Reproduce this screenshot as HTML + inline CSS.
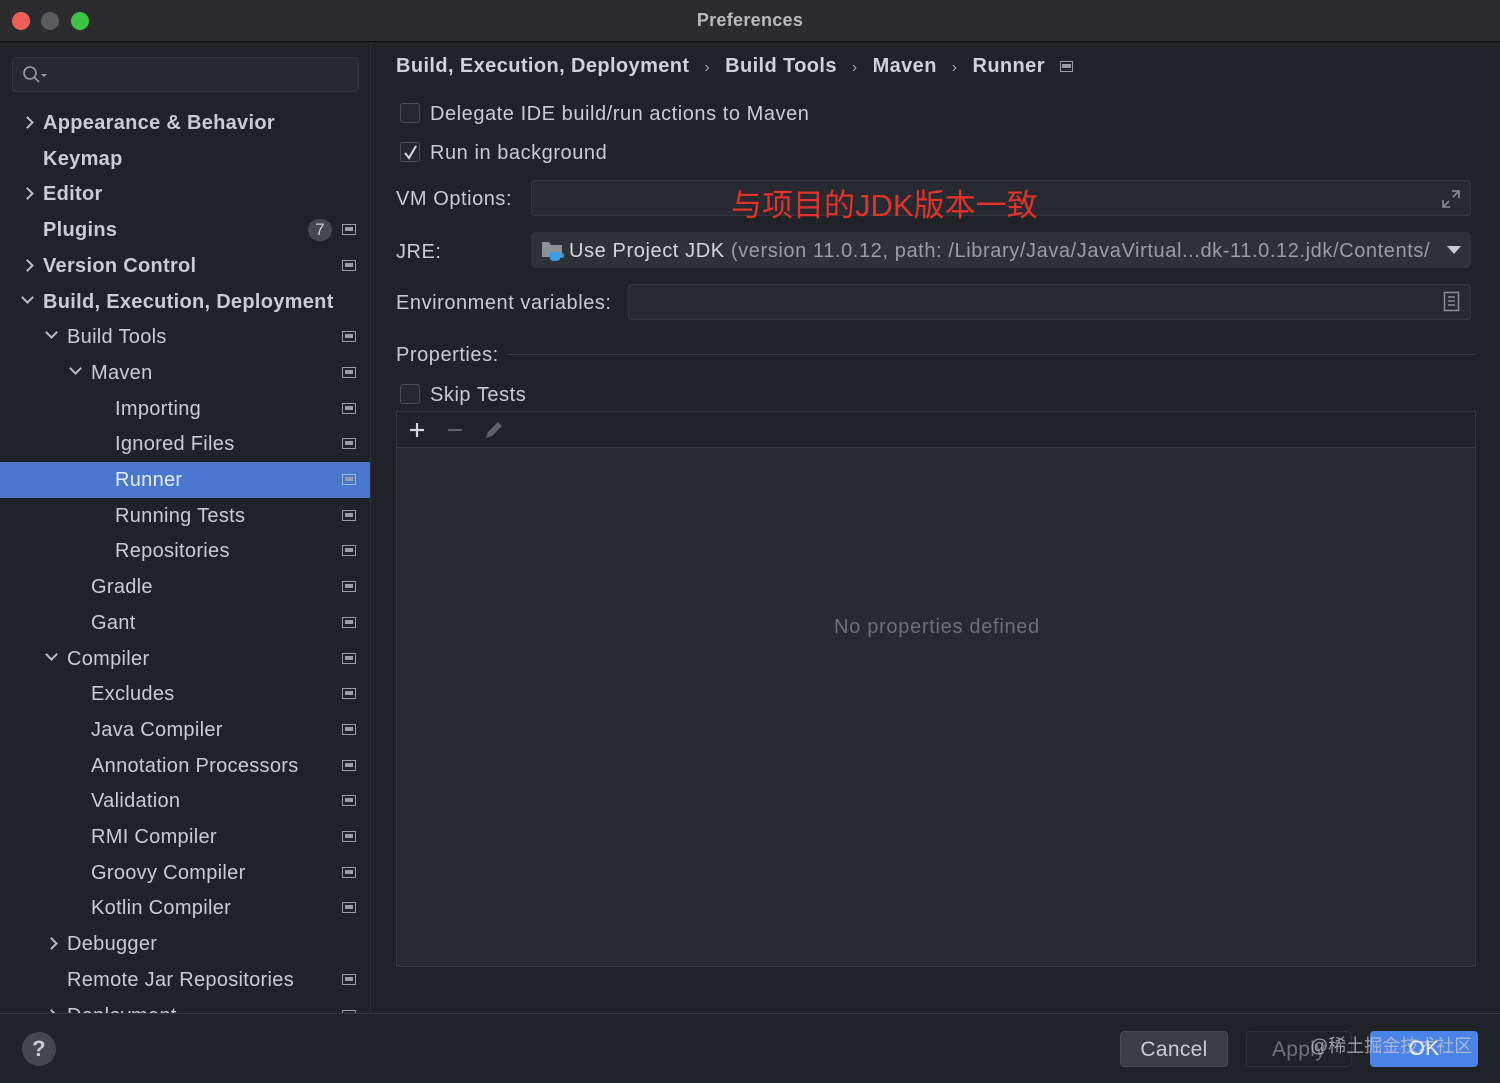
<!DOCTYPE html>
<html><head><meta charset="utf-8">
<style>
*{margin:0;padding:0;box-sizing:border-box}
body{width:1500px;height:1083px;background:#1e2025;font-family:"Liberation Sans","Noto Sans CJK SC",sans-serif;color:#c9ccd1;overflow:hidden;position:relative;font-size:20px;letter-spacing:0.3px}
.abs{position:absolute}
.title{left:0;top:0;width:1500px;height:42px;background:#2c2c2f;border-bottom:1px solid #101113;text-align:center;line-height:40px;font-weight:bold;font-size:18px;color:#b9babd}
.dot{position:absolute;top:12px;width:18px;height:18px;border-radius:50%}
.side{left:0;top:42px;width:371px;height:971px;background:#1f2227;border-right:1px solid #2d3036;overflow:hidden}
.row{position:absolute;left:0;width:371px;height:36px;line-height:36px;white-space:nowrap}
.row.b{font-weight:bold}
.row.sel{background:#4a77cd;color:#e6ecf6}
.arr{position:absolute;top:13px;width:9px;height:9px;border-right:2px solid #b9bcc2;border-bottom:2px solid #b9bcc2}
.r{transform:rotate(-45deg)}
.d{transform:rotate(45deg);top:9px}
.ic{position:absolute;left:342px;top:12px;width:14px;height:11px;border:1.5px solid #9a9da3}
.ic::after{content:"";position:absolute;left:1.5px;top:2px;width:8px;height:4px;background:#9a9da3}
.field{background:#272a30;border:1px solid #33363c;border-radius:3px}
.cb{position:absolute;width:20px;height:20px;border:1px solid #4a4d53;border-radius:3px;background:#25282d}
.lbl{position:absolute;font-size:20px;color:#c9ccd1;white-space:nowrap;letter-spacing:0.55px}
.btn{position:absolute;top:1031px;height:36px;border-radius:4px;text-align:center;line-height:36px;font-size:21px}
</style></head><body>
<div class="abs title">Preferences
<div class="dot" style="left:12px;background:#ed5f58"></div>
<div class="dot" style="left:41px;background:#5b5b5e"></div>
<div class="dot" style="left:71px;background:#3ec444"></div>
</div>

<div class="abs side">
  <div class="abs" style="left:12px;top:15px;width:347px;height:35px;background:#262930;border:1px solid #31343a;border-radius:3px">
    <svg width="30" height="24" style="position:absolute;left:8px;top:6px"><circle cx="9" cy="9" r="6" fill="none" stroke="#9a9da3" stroke-width="1.6"/><line x1="13.5" y1="13.5" x2="18" y2="18" stroke="#9a9da3" stroke-width="1.6"/><path d="M20 10 L26 10 L23 13 Z" fill="#9a9da3"/></svg>
  </div>
</div>

<div class="abs" style="left:371px;top:42px;width:1129px;height:971px;background:#1f2227"></div>

<div class="lbl" style="left:396px;top:55px;font-weight:bold;color:#cfd2d7;letter-spacing:0.4px">Build, Execution, Deployment <span style="color:#9a9da3;font-weight:normal;margin:0 9px;font-size:16px">›</span> Build Tools <span style="color:#9a9da3;font-weight:normal;margin:0 9px;font-size:16px">›</span> Maven <span style="color:#9a9da3;font-weight:normal;margin:0 9px;font-size:16px">›</span> Runner</div>
<div class="abs" style="left:1060px;top:61px;width:13px;height:11px;border:1.5px solid #9a9da3"><div style="margin:2px 1px;height:4px;background:#9a9da3"></div></div>

<div class="cb" style="left:400px;top:103px"></div>
<div class="lbl" style="left:430px;top:103px">Delegate IDE build/run actions to Maven</div>
<div class="cb" style="left:400px;top:142px"><svg width="20" height="20" style="position:absolute;left:0;top:0"><path d="M4 10 L8 15 L15 3" fill="none" stroke="#d6d8dc" stroke-width="2"/></svg></div>
<div class="lbl" style="left:430px;top:142px">Run in background</div>

<div class="lbl" style="left:396px;top:188px">VM Options:</div>
<div class="abs field" style="left:531px;top:180px;width:940px;height:36px"></div>
<div class="lbl" style="left:731px;top:180px;font-size:31px;color:#e2322a;letter-spacing:0">与项目的JDK版本一致</div>
<svg class="abs" style="left:1440px;top:188px" width="22" height="22"><path d="M12 3 L19 3 L19 10 M19 3 L13 9 M10 19 L3 19 L3 12 M3 19 L9 13" fill="none" stroke="#8a8d93" stroke-width="1.6"/></svg>

<div class="lbl" style="left:396px;top:241px">JRE:</div>
<div class="abs" style="left:531px;top:232px;width:940px;height:36px;background:#2e3138;border-radius:4px"></div>
<svg class="abs" style="left:541px;top:240px" width="24" height="22"><path d="M1 2 L8 2 L10 5 L21 5 L21 17 L1 17 Z" fill="#8d9198"/><path d="M9 12 L19 12 L19 18 Q19 21 14 21 Q9 21 9 18 Z" fill="#3aa0e6"/><path d="M19 14 L22 14 L22 17 L19 17" fill="none" stroke="#3aa0e6" stroke-width="1.5"/></svg>
<div class="lbl" style="left:569px;top:240px;color:#d4d7dc;letter-spacing:0.6px">Use Project JDK <span style="color:#9a9da3">(version 11.0.12, path: /Library/Java/JavaVirtual...dk-11.0.12.jdk/Contents/</span></div>
<svg class="abs" style="left:1446px;top:245px" width="16" height="10"><path d="M1 1 L15 1 L8 9 Z" fill="#c8cbd0"/></svg>

<div class="lbl" style="left:396px;top:292px">Environment variables:</div>
<div class="abs field" style="left:628px;top:284px;width:843px;height:36px"></div>
<svg class="abs" style="left:1443px;top:291px" width="18" height="22"><rect x="1.5" y="1.5" width="14" height="18" fill="none" stroke="#8a8d93" stroke-width="1.5"/><path d="M5 6 H12 M5 10 H12 M5 14 H12" stroke="#8a8d93" stroke-width="1.4"/></svg>

<div class="lbl" style="left:396px;top:344px">Properties:</div>
<div class="abs" style="left:507px;top:354px;width:968px;height:1px;background:#34373d"></div>

<div class="cb" style="left:400px;top:384px"></div>
<div class="lbl" style="left:430px;top:384px">Skip Tests</div>

<div class="abs" style="left:396px;top:411px;width:1080px;height:556px;border:1px solid #34373d;background:#272a31"></div>
<div class="abs" style="left:397px;top:412px;width:1078px;height:36px;background:#1f2227;border-bottom:1px solid #363940"></div>
<svg class="abs" style="left:405px;top:418px" width="110" height="24"><path d="M12 5 V19 M5 12 H19" stroke="#d4d7dc" stroke-width="2.2"/><path d="M43 12 H57" stroke="#5e6168" stroke-width="2.2"/><path d="M81 20 L83 14 L93 4 L97 8 L87 18 Z" fill="#5e6168"/></svg>
<div class="lbl" style="left:834px;top:616px;color:#6c6f75;letter-spacing:0.7px">No properties defined</div>

<div class="abs" style="left:0;top:1013px;width:1500px;height:70px;background:#1f2227;border-top:1px solid #34373d"></div>
<div class="abs" style="left:22px;top:1032px;width:34px;height:34px;border-radius:50%;background:#44474d;color:#c9ccd1;text-align:center;line-height:34px;font-weight:bold;font-size:22px">?</div>
<div class="btn" style="left:1120px;width:108px;background:#3a3d44;border:1px solid #46494f;color:#c9ccd1">Cancel</div>
<div class="btn" style="left:1246px;width:106px;border:1px solid #2e3137;color:#6f7278">Apply</div>
<div class="btn" style="left:1370px;width:108px;background:#4b84e8;color:#fff">OK</div>
<div class="lbl" style="left:1310px;top:1032px;font-size:18px;color:rgba(200,200,205,0.75);letter-spacing:0">@稀土掘金技术社区</div>

<script>
var items=[
["Appearance & Behavior",0,"r",1,0],["Keymap",0,"",1,0],["Editor",0,"r",1,0],["Plugins",0,"",1,1,"7"],["Version Control",0,"r",1,1],
["Build, Execution, Deployment",0,"d",1,0],["Build Tools",1,"d",0,1],["Maven",2,"d",0,1],["Importing",3,"",0,1],["Ignored Files",3,"",0,1],
["Runner",3,"",0,1,null,1],["Running Tests",3,"",0,1],["Repositories",3,"",0,1],["Gradle",2,"",0,1],["Gant",2,"",0,1],["Compiler",1,"d",0,1],
["Excludes",2,"",0,1],["Java Compiler",2,"",0,1],["Annotation Processors",2,"",0,1],["Validation",2,"",0,1],["RMI Compiler",2,"",0,1],
["Groovy Compiler",2,"",0,1],["Kotlin Compiler",2,"",0,1],["Debugger",1,"r",0,0],["Remote Jar Repositories",1,"",0,1],["Deployment",1,"r",0,1]];
var h="";
items.forEach(function(it,i){
 var top=105+i*35.7-42; var tx=43+it[1]*24; var ax=tx-20;
 var s='<div class="row'+(it[3]?' b':'')+(it[6]?' sel':'')+'" style="top:'+top+'px">';
 if(it[2]) s+='<div class="arr '+it[2]+'" style="left:'+ax+'px"></div>';
 s+='<span style="position:absolute;left:'+tx+'px">'+it[0].replace("&","&amp;")+'</span>';
 if(it[5]) s+='<div style="position:absolute;left:308px;top:7px;width:24px;height:22px;border-radius:11px;background:#44474d;text-align:center;line-height:22px;font-size:17px;font-weight:normal">'+it[5]+'</div>';
 if(it[4]) s+='<div class="ic"'+(it[6]?' style="border-color:#9cb6e6"':'')+'></div>';
 s+='</div>'; h+=s;
});
document.querySelector('.side').insertAdjacentHTML('beforeend',h);
</script>
</body></html>
